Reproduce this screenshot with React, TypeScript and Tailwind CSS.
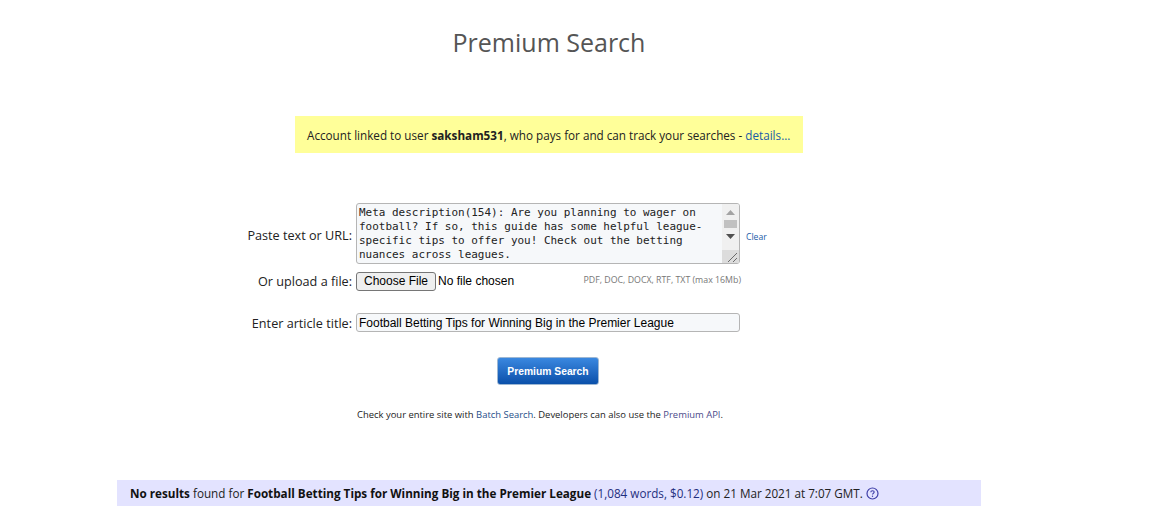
export default function App() {
  const sans = "font-['Open_Sans',sans-serif]";
  const label = "w-[352px] text-right text-[12.65px] leading-[18px] text-[#222]";
  return (
    <div className={`w-[1098px] h-[521px] overflow-hidden bg-white flex flex-col items-center ${sans}`}>
      <h1 className="mt-[24px] h-[36px] text-[25px] leading-[36px] font-normal text-[#555]">Premium Search</h1>

      <div className="mt-[56px] w-[508px] h-[37px] bg-[#ffff99] flex items-center pl-[12px] pt-[2px] text-[11.7px] text-[#222] whitespace-nowrap">
        <span>
          Account linked to user <b className="font-bold">saksham531</b>, who pays for and can track your searches -{" "}
          <a className="text-[#1a5ba8]">details...</a>
        </span>
      </div>

      <form className="mt-[50px] w-full flex flex-col">
        <div className="flex items-center h-[61px]">
          <label className={`${label} pt-[2px]`}>Paste text or URL:</label>
          <div className="ml-[4px] w-[384px] h-[61px] flex border border-[#b5b5b5] rounded-[3px] bg-[#f6f8fa] overflow-hidden">
            <textarea
              readOnly
              className="flex-1 h-full resize-none overflow-hidden bg-transparent outline-none pl-[2px] pt-[2px] font-['DejaVu_Sans_Mono',monospace] text-[10.97px] leading-[14px] text-[#222]"
              value={"Meta description(154): Are you planning to wager on football? If so, this guide has some helpful league-specific tips to offer you! Check out the betting nuances across leagues."}
            />
            <div className="w-[17px] h-full bg-[#f0f0f0] flex flex-col">
              <div className="h-[46px] flex flex-col items-center pt-[6px]">
                <svg width="9" height="5" viewBox="0 0 9 5"><path d="M0 5L4.5 0L9 5Z" fill="#a3a3a3" /></svg>
                <div className="mt-[5px] w-[13px] h-[8px] bg-[#c1c1c1]" />
                <svg className="mt-[6px]" width="9" height="5" viewBox="0 0 9 5"><path d="M0 0L9 0L4.5 5Z" fill="#505050" /></svg>
              </div>
              <div className="flex-1 bg-[#dcdcdc] flex items-end justify-end">
                <svg width="14" height="13" viewBox="0 0 14 13"><path d="M3 12L12 3M8 12L12 8" stroke="#6b6b6b" strokeWidth="1" fill="none" /></svg>
              </div>
            </div>
          </div>
          <a className="ml-[6px] pt-[8px] text-[8.6px] text-[#1a5ba8]">Clear</a>
        </div>

        <div className="flex items-center h-[20px] mt-[7px]">
          <label className={label}>Or upload a file:</label>
          <input
            type="file"
            className="ml-[4px] w-[226px] font-['Liberation_Sans',sans-serif] text-[12px] leading-[15px] text-black file:mr-[2px] file:h-[19px] file:px-[7px] file:bg-[#efefef] file:border file:border-solid file:border-[#767676] file:rounded-[3px] file:text-black"
          />
          <span className="w-[159px] text-right text-[8.8px] text-[#777] whitespace-nowrap">PDF, DOC, DOCX, RTF, TXT (max 16Mb)</span>
        </div>

        <div className="flex items-center h-[19px] mt-[22px]">
          <label className={label}>Enter article title:</label>
          <input
            readOnly
            className="ml-[4px] w-[384px] h-[19px] border border-[#b5b5b5] rounded-[3px] bg-[#f6f8fa] px-[2px] outline-none font-['Liberation_Sans',sans-serif] text-[12px] text-black"
            value="Football Betting Tips for Winning Big in the Premier League"
          />
        </div>

        <div className="flex justify-center mt-[25px] pr-[2px]">
          <button type="button" className="w-[102px] h-[28px] pt-[1px] rounded-[3px] border border-[#9db7d3] bg-gradient-to-b from-[#3a88e0] to-[#0a50aa] text-white font-['Liberation_Sans',sans-serif] font-bold text-[10.3px]">
            Premium Search
          </button>
        </div>
      </form>

      <p className="mt-[23px] mr-[18px] h-[14px] text-[9.44px] leading-[14px] text-[#222] whitespace-nowrap">
        Check your entire site with <a className="text-[#1f4f8a]">Batch Search</a>. Developers can also use the <a className="text-[#4b4a8a]">Premium API</a>.
      </p>

      <div className="mt-[58px] w-[864px] h-[26px] bg-[#e3e3ff] flex items-center pl-[13px] pt-[1px] text-[11.7px] text-[#222] whitespace-nowrap">
        <span><b className="font-bold text-[#111]">No results</b> found for <b className="font-bold text-[#111]">Football Betting Tips for Winning Big in the Premier League</b> <span className="text-[#1f2f80]">(1,084 words, $0.12)</span> on 21 Mar 2021 at 7:07 GMT.</span>
        <svg className="ml-[3px]" width="13" height="13" viewBox="0 0 13 13" fill="none">
          <circle cx="6.5" cy="6.5" r="5.5" stroke="#3f3fa8" strokeWidth="1.2" />
          <path d="M4.8 5.2C4.8 4.2 5.6 3.7 6.5 3.7C7.5 3.7 8.2 4.3 8.2 5.1C8.2 6.2 6.5 6.2 6.5 7.6" stroke="#3f3fa8" strokeWidth="1.1" />
          <circle cx="6.5" cy="9.3" r="0.7" fill="#3f3fa8" />
        </svg>
      </div>
    </div>
  );
}
